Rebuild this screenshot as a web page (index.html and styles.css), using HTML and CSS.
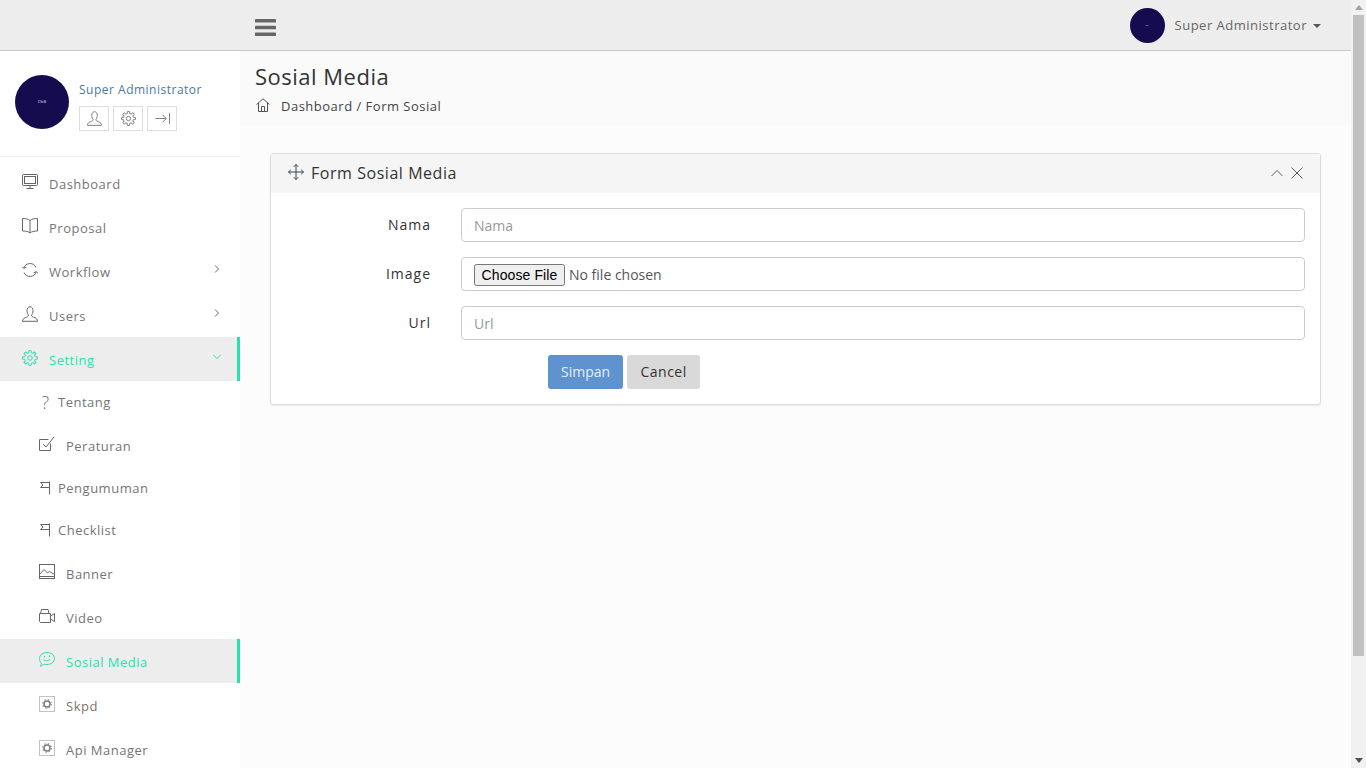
FILE: index.html

```html
<!DOCTYPE html>
<html lang="en">
<head>
  <meta charset="UTF-8" />
  <meta name="viewport" content="width=device-width, initial-scale=1.0"/>
  <title>Sosial Media</title>
  <link rel="stylesheet" href="styles.css">
</head>
<body>
  <svg class="sprite" width="0" height="0" aria-hidden="true">
    <symbol id="i-desktop" viewBox="0 0 16 16"><rect x="0.500" y="0.500" width="15" height="11" rx="1"/><rect x="2.500" y="2.500" width="11" height="7"/><path d="M4.500 14.500h7M8 12v2.500"/></symbol>
    <symbol id="i-book" viewBox="0 0 16 16"><path d="M8 2.500C6.500 1 3.500 .5 .5 .5v12.500c3 0 6 .5 7.500 2 1.500-1.500 4.500-2 7.500-2V.5c-3 0-6 .5-7.500 2zM8 2.500v12.500"/></symbol>
    <symbol id="i-refresh" viewBox="0 0 16 16"><path d="M1.800 6.200A6.500 6.500 0 0 1 14 5.500M14.200 9.800A6.500 6.500 0 0 1 2 10.500M0 4.500l1.800 1.900 2.600-1.200M16 11.500l-1.800-1.900-2.600 1.200"/></symbol>
    <symbol id="i-user" viewBox="0 0 16 16"><path d="M8 0.800C5.800 0.800 5 2.800 5 4.800c0 2 1 3.500 1.500 4.300 0 1.400-1.500 1.900-3.500 2.700-1.500.6-2.500 1.700-2.500 3.500h15c0-1.800-1-2.900-2.500-3.500-2-.8-3.500-1.300-3.500-2.700.5-.8 1.500-2.300 1.500-4.300 0-2-.8-4-3-4z"/></symbol>
    <symbol id="i-gear" viewBox="0 0 16 16">
      <circle cx="8" cy="8" r="2.300"/>
      <g stroke-linejoin="round">
        <path d="M5.970 3.100L6.600 2.900 6.900 .6H9.100L9.400 2.900 10.030 3.100"/>
        <path transform="rotate(45 8 8)" d="M5.970 3.100L6.600 2.900 6.900 .6H9.100L9.400 2.900 10.030 3.100"/>
        <path transform="rotate(90 8 8)" d="M5.970 3.100L6.600 2.900 6.900 .6H9.100L9.400 2.900 10.030 3.100"/>
        <path transform="rotate(135 8 8)" d="M5.970 3.100L6.600 2.900 6.900 .6H9.100L9.400 2.900 10.030 3.100"/>
        <path transform="rotate(180 8 8)" d="M5.970 3.100L6.600 2.900 6.900 .6H9.100L9.400 2.900 10.030 3.100"/>
        <path transform="rotate(225 8 8)" d="M5.970 3.100L6.600 2.900 6.900 .6H9.100L9.400 2.900 10.030 3.100"/>
        <path transform="rotate(270 8 8)" d="M5.970 3.100L6.600 2.900 6.900 .6H9.100L9.400 2.900 10.030 3.100"/>
        <path transform="rotate(315 8 8)" d="M5.970 3.100L6.600 2.900 6.900 .6H9.100L9.400 2.900 10.030 3.100"/>
      </g>
    </symbol>
    <symbol id="i-logout" viewBox="0 0 16 16"><path d="M0.500 8h11M8 4l4 4-4 4M15.500 2v12"/></symbol>
    <symbol id="i-check" viewBox="0 0 16 16"><path d="M11.500 7.500v7h-11v-11h9M4 8l3 3 8-10"/></symbol>
    <symbol id="i-flag" viewBox="0 0 11 14"><path d="M9.500 0.500v13M0.500 1.500h9M0.500 1.500l2.500 2.500-2.500 2.500h9"/></symbol>
    <symbol id="i-picture" viewBox="0 0 16 16"><rect x="0.500" y="0.500" width="15" height="14"/><path d="M0.500 10.500l4.500-5 3.500 3.500 2-1.500 5 3M0.500 12.500h15"/></symbol>
    <symbol id="i-video" viewBox="0 0 16 16"><path d="M0.500 5.500h11v9h-10l-1-1zM11.500 8l4-2.500v8l-4-2.500M1.500 5.500l1-4h6.500l1 4"/></symbol>
    <symbol id="i-bubble" viewBox="0 0 16 16"><path d="M8 .5c4 0 7.500 2.400 7.500 6s-3.500 6-7.500 6c-1 0-2-.1-3-.4-1 1-2.500 1.900-3.500 2.100.5-.8.8-1.800.8-3C1.200 10 .5 8.300 .5 6.500 .5 2.900 4 .5 8 .5z"/><path d="M4.500 7.500c1.500 1.800 5 1.800 6.500-.5M5.500 4v1.500M10.500 3.500V5"/></symbol>
    <symbol id="i-frame" viewBox="0 0 16 16"><rect x="0.500" y="0.500" width="15" height="15" stroke-dasharray="1 1" stroke-opacity="0.8"/><circle cx="8" cy="8" r="3" stroke-width="1.500" stroke-opacity="0.85"/><circle cx="8" cy="8" r="4.400" stroke-width="1.100" stroke-dasharray="1.500 2" stroke-opacity="0.7"/></symbol>
    <symbol id="i-move" viewBox="0 0 16 16"><path d="M8 0.500v15M0.500 8h15M5.800 2.800L8 0.500l2.200 2.300M5.800 13.200L8 15.500l2.200-2.300M2.800 5.800L0.500 8l2.300 2.200M13.200 5.800L15.500 8l-2.300 2.200"/></symbol>
    <symbol id="i-home" viewBox="0 0 14 14"><path d="M0.500 6.500L7 0.800l6.500 5.700M2.500 5v8.500h9V5M5.500 13.500V8.500h3v5"/></symbol>
    <symbol id="i-up" viewBox="0 0 12 12"><path d="M0.500 9L6 3.500 11.500 9"/></symbol>
    <symbol id="i-close" viewBox="0 0 12 12"><path d="M0.500 0.500l11 11M11.500 0.500l-11 11"/></symbol>
    <symbol id="i-right" viewBox="0 0 8 10"><path d="M2 1.500l3.500 3.500-3.500 3.500"/></symbol>
    <symbol id="i-down" viewBox="0 0 10 8"><path d="M1.500 2l3.500 3.500 3.500-3.500"/></symbol>
  </svg>

  <div class="page">
    <header class="topbar">
      <button class="menu-toggle" type="button" aria-label="Menu">
        <svg width="21" height="17" viewBox="0 0 21 17"><rect width="21" height="3.500" rx="0.500"/><rect y="6.800" width="21" height="3.500" rx="0.500"/><rect y="13.500" width="21" height="3.500" rx="0.500"/></svg>
      </button>
      <div class="top-user">
        <span class="avatar avatar-sm">--</span>
        <span class="top-user-name">Super Administrator</span>
        <span class="caret"></span>
      </div>
    </header>

    <div class="layout">
      <aside class="sidebar">
        <div class="profile">
          <span class="avatar avatar-lg">DbB</span>
          <div class="profile-info">
            <div class="profile-name">Super Administrator</div>
            <div class="profile-actions">
              <a class="profile-btn"><svg class="icon icon-14"><use href="#i-user"/></svg></a>
              <a class="profile-btn"><svg class="icon icon-14"><use href="#i-gear"/></svg></a>
              <a class="profile-btn"><svg class="icon icon-14"><use href="#i-logout"/></svg></a>
            </div>
          </div>
        </div>
        <ul class="menu">
          <li class="menu-item"><svg class="icon"><use href="#i-desktop"/></svg>Dashboard</li>
          <li class="menu-item"><svg class="icon"><use href="#i-book"/></svg>Proposal</li>
          <li class="menu-item"><svg class="icon"><use href="#i-refresh"/></svg>Workflow<svg class="arrow arrow-right"><use href="#i-right"/></svg></li>
          <li class="menu-item"><svg class="icon"><use href="#i-user"/></svg>Users<svg class="arrow arrow-right"><use href="#i-right"/></svg></li>
          <li class="menu-item active"><svg class="icon"><use href="#i-gear"/></svg>Setting<svg class="arrow arrow-down"><use href="#i-down"/></svg></li>
          <li class="menu-item sub short"><span class="icon-q">?</span>Tentang</li>
          <li class="menu-item sub"><svg class="icon"><use href="#i-check"/></svg>Peraturan</li>
          <li class="menu-item sub short"><svg class="icon-flag"><use href="#i-flag"/></svg>Pengumuman</li>
          <li class="menu-item sub short"><svg class="icon-flag"><use href="#i-flag"/></svg>Checklist</li>
          <li class="menu-item sub"><svg class="icon"><use href="#i-picture"/></svg>Banner</li>
          <li class="menu-item sub"><svg class="icon"><use href="#i-video"/></svg>Video</li>
          <li class="menu-item sub active"><svg class="icon"><use href="#i-bubble"/></svg>Sosial Media</li>
          <li class="menu-item sub"><svg class="icon"><use href="#i-frame"/></svg>Skpd</li>
          <li class="menu-item sub"><svg class="icon"><use href="#i-frame"/></svg>Api Manager</li>
        </ul>
      </aside>

      <main class="main">
        <div class="page-head">
          <h1 class="page-title">Sosial Media</h1>
          <div class="crumbs">
            <svg class="icon-home"><use href="#i-home"/></svg>
            <span>Dashboard / Form Sosial</span>
          </div>
        </div>
        <section class="card">
          <div class="card-head">
            <svg class="icon icon-move"><use href="#i-move"/></svg>
            <span class="card-title">Form Sosial Media</span>
            <svg class="tool"><use href="#i-up"/></svg>
            <svg class="tool"><use href="#i-close"/></svg>
          </div>
          <form class="card-body">
            <div class="field">
              <label class="field-label">Nama</label>
              <input class="field-input" type="text" placeholder="Nama" />
            </div>
            <div class="field">
              <label class="field-label">Image</label>
              <input class="field-input field-file" type="file" />
            </div>
            <div class="field">
              <label class="field-label">Url</label>
              <input class="field-input" type="text" placeholder="Url" />
            </div>
            <div class="form-actions">
              <button class="btn btn-primary" type="button">Simpan</button>
              <button class="btn btn-cancel" type="button">Cancel</button>
            </div>
          </form>
        </section>
      </main>
    </div>
  </div>

  <div class="scrollbar">
    <span class="sb-up"></span>
    <span class="sb-thumb"></span>
    <span class="sb-down"></span>
  </div>
</body>
</html>
```

FILE: styles.css

```css
* {
  box-sizing: border-box;
}
body {
  margin: 0;
  height: 100vh;
  display: flex;
  overflow: hidden;
  font-family: "Open Sans", sans-serif;
  font-size: 13px;
  letter-spacing: 0.5px;
  color: #333;
  background: #fcfcfc;
}
.sprite {
  position: absolute;
}
.page {
  flex: 1;
  min-width: 0;
  height: 100vh;
  overflow: hidden;
}
.icon, .icon-flag, .icon-home, .tool, .arrow {
  fill: none;
  stroke: currentColor;
  stroke-width: 1;
  flex: none;
}

/* browser scrollbar */
.scrollbar {
  width: 15px;
  flex: none;
  display: flex;
  flex-direction: column;
  align-items: center;
  background: #f1f1f1;
}
.sb-up {
  height: 5px;
  margin: 5px 0;
  border-bottom: 5px solid #a3a3a3;
  border-left: 4px solid transparent;
  border-right: 4px solid transparent;
}
.sb-thumb {
  width: 11px;
  height: 641px;
  background: #c1c1c1;
}
.sb-down {
  margin-top: auto;
  margin-bottom: 5px;
  border-top: 5px solid #505050;
  border-left: 4px solid transparent;
  border-right: 4px solid transparent;
}

/* top bar */
.topbar {
  height: 51px;
  display: flex;
  align-items: center;
  justify-content: space-between;
  padding: 0 30px 0 255px;
  background: #ededed;
  border-bottom: 1px solid #c9c9c9;
}
.menu-toggle {
  display: flex;
  padding: 0;
  margin-top: 4px;
  border: none;
  background: none;
  fill: #666;
}
.top-user {
  display: flex;
  align-items: center;
  color: #666;
}
.top-user-name {
  margin-left: 10px;
  margin-bottom: 1px;
}
.caret {
  margin-left: 6px;
  margin-top: 2px;
  border-top: 4px solid #555;
  border-left: 4px solid transparent;
  border-right: 4px solid transparent;
}
.avatar {
  display: flex;
  align-items: center;
  justify-content: center;
  flex: none;
  border-radius: 50%;
  background: #150c4f;
  color: #dcdbe8;
  letter-spacing: 0;
}
.avatar-sm {
  width: 35px;
  height: 35px;
  font-size: 5px;
}
.avatar-lg {
  width: 54px;
  height: 54px;
  font-size: 4px;
}

/* sidebar */
.layout {
  display: flex;
  min-height: 717px;
}
.sidebar {
  width: 240px;
  flex: none;
  background: #fff;
}
.profile {
  height: 106px;
  display: flex;
  align-items: center;
  padding: 0 15px 4px;
  border-bottom: 1px solid #eee;
}
.profile-info {
  margin-left: 10px;
  margin-top: 9px;
}
.profile-name {
  font-size: 12px;
  color: #4a7a9c;
  line-height: 16px;
}
.profile-actions {
  display: flex;
  gap: 4px;
  margin-top: 8px;
}
.profile-btn {
  width: 30px;
  height: 25px;
  display: flex;
  align-items: center;
  justify-content: center;
  border: 1px solid #ddd;
  color: #777;
}
.icon-14 {
  width: 15px;
  height: 15px;
}
.menu {
  list-style: none;
  margin: 4px 0 0;
  padding: 0;
}
.menu-item {
  height: 44px;
  display: flex;
  align-items: center;
  padding: 2px 12px 0 22px;
  color: #757575;
}
.menu-item .icon {
  width: 16px;
  height: 16px;
  margin: 0 11px 4px 0;
  color: #666;
}
.menu-item.sub {
  padding-left: 39px;
}
.menu-item.short {
  height: 42px;
  padding-top: 0;
  padding-left: 40px;
}
.icon-flag {
  width: 11px;
  height: 14px;
  margin: 0 7px 1px 0;
  color: #666;
}
.icon-q {
  width: 11px;
  margin: 0 7px 1px 0;
  text-align: center;
  font-size: 18px;
  font-weight: 300;
  line-height: 18px;
}
.arrow {
  margin-left: auto;
  color: #666;
}
.arrow-right {
  width: 8px;
  height: 10px;
  margin-bottom: 7px;
  margin-right: 7px;
}
.arrow-down {
  width: 10px;
  height: 8px;
  margin-bottom: 6px;
  margin-right: 3px;
}
.menu-item.active {
  background: #ededed;
  border-right: 3px solid #2ae0ad;
  color: #2ae0ad;
}
.menu-item.active .icon,
.menu-item.active .arrow {
  color: #2ae0ad;
}

/* content */
.main {
  flex: 1;
  min-width: 0;
}
.page-head {
  height: 74px;
  padding: 10px 15px 0;
  background: #fafafa;
}
.page-title {
  margin: 0;
  font-size: 22px;
  font-weight: 400;
  line-height: 30px;
}
.crumbs {
  display: flex;
  align-items: center;
  margin-top: 5px;
  color: #444;
  line-height: 20px;
}
.crumbs span {
  margin-left: 11px;
}
.icon-home {
  width: 14px;
  height: 14px;
  margin: 0 0 2px 1px;
  color: #555;
}
.card {
  margin: 28px 30px 0;
  background: #fff;
  border: 1px solid #ddd;
  border-radius: 3px;
  box-shadow: 0 1px 2px rgba(0, 0, 0, 0.08);
}
.card-head {
  height: 39px;
  display: flex;
  align-items: center;
  padding: 0 17px 2px;
  background: #f5f5f5;
}
.icon-move {
  width: 16px;
  height: 16px;
  margin-bottom: 2px;
  color: #33475b;
}
.card-title {
  margin-left: 7px;
  margin-right: auto;
  font-size: 16px;
  letter-spacing: 0.55px;
}
.tool {
  width: 12px;
  height: 12px;
  margin-left: 8px;
  color: #4f5f6f;
}
.card-body {
  padding: 15px 15px 15px 0;
}
.field {
  display: flex;
  align-items: center;
  margin-bottom: 15px;
}
.field-label {
  width: 160px;
  flex: none;
  margin-right: 30px;
  margin-bottom: 1px;
  text-align: right;
  font-size: 14px;
  letter-spacing: 1px;
}
.field-input {
  flex: 1;
  min-width: 0;
  height: 34px;
  padding: 6px 12px;
  border: 1px solid #ccc;
  border-radius: 4px;
  background: #fff;
  color: #555;
  font-family: inherit;
  font-size: 14px;
  letter-spacing: 0;
}
.field-input::placeholder {
  color: #999;
}
.field-file {
  padding: 6px 12px 4px;
}
.field-file::file-selector-button {
  font-family: "Liberation Sans", sans-serif;
  font-size: 14px;
  letter-spacing: 0.1px;
  width: 91px;
  height: 22px;
  padding: 0;
  margin-right: 4px;
}
.form-actions {
  display: flex;
  gap: 4px;
  padding-left: 277px;
}
.btn {
  height: 34px;
  padding: 0 13px 2px;
  border: none;
  border-radius: 3px;
  font-family: inherit;
  font-size: 14px;
  letter-spacing: 0;
}
.btn-primary {
  background: #5f93cf;
  color: #e8eef6;
}
.btn-cancel {
  width: 73px;
  padding: 0 0 2px;
  background: #d9d9d9;
  color: #333;
  letter-spacing: 0.5px;
}
```
